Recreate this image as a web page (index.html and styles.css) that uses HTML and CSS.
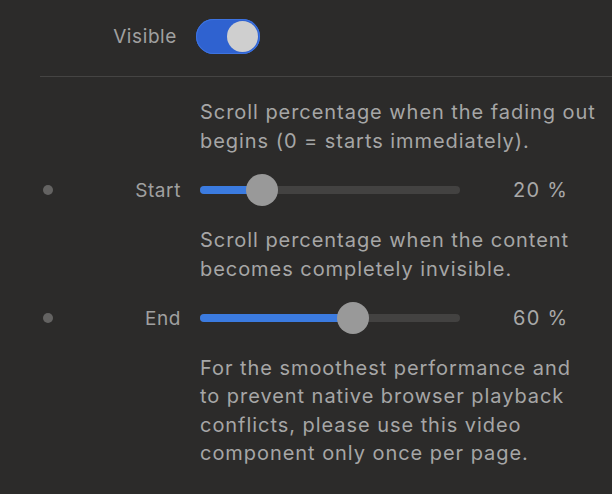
FILE: index.html
```html
<!DOCTYPE html>
<html>
<head>
<meta charset="utf-8">
<link rel="stylesheet" href="styles.css">
</head>
<body>
<div class="panel">
  <div class="row toggle-row">
    <span class="label vis-label">Visible</span>
    <div class="toggle"><div class="toggle-knob"></div></div>
  </div>
  <div class="sep"></div>
  <p class="desc desc1">Scroll percentage when the fading out begins (0 = starts immediately).</p>
  <div class="row slider-row">
    <span class="dot"></span>
    <span class="label">Start</span>
    <div class="slider">
      <div class="track"></div>
      <div class="fill" style="width:62px"></div>
      <div class="knob" style="left:46px"></div>
    </div>
    <span class="value">20 %</span>
  </div>
  <p class="desc desc2">Scroll percentage when the content becomes completely invisible.</p>
  <div class="row slider-row">
    <span class="dot"></span>
    <span class="label">End</span>
    <div class="slider">
      <div class="track"></div>
      <div class="fill" style="width:153px"></div>
      <div class="knob" style="left:137px"></div>
    </div>
    <span class="value">60 %</span>
  </div>
  <p class="desc desc3">For the smoothest performance and to prevent native browser playback conflicts, please use this video component only once per page.</p>
</div>
</body>
</html>
```
FILE: styles.css
```css
html, body {
  margin: 0;
  padding: 0;
  background: #2c2b2a;
}
body {
  width: 612px;
  height: 494px;
  overflow: hidden;
  font-family: Inter, "Noto Sans", sans-serif;
  color: #a5a5a5;
}
.panel {
  display: flex;
  flex-direction: column;
  padding-top: 19px;
}
.row {
  display: flex;
  align-items: center;
}
.toggle-row {
  height: 35px;
  padding-left: 100px;
}
.label {
  font-size: 19px;
  letter-spacing: 0.6px;
  color: #a0a0a0;
  text-align: right;
}
.vis-label {
  width: 77px;
  margin-right: 19px;
}
.toggle {
  width: 64px;
  height: 35px;
  border-radius: 18px;
  background: #2f62d0;
  box-shadow: inset 0 0 0 1px #3d73e0;
  box-sizing: border-box;
  display: flex;
  justify-content: flex-end;
  align-items: center;
  padding-right: 2px;
}
.toggle-knob {
  width: 31px;
  height: 31px;
  border-radius: 50%;
  background: #cfcfcf;
}
.sep {
  margin-top: 22px;
  margin-left: 40px;
  height: 1px;
  background: #454443;
}
.desc {
  margin: 21px 0 0 200px;
  width: 408px;
  font-size: 20px;
  letter-spacing: 0.95px;
  line-height: 28.5px;
  color: #a6a6a6;
}
.slider-row {
  height: 32px;
  margin-top: 19px;
  padding-left: 43px;
}
.dot {
  width: 10px;
  height: 10px;
  border-radius: 50%;
  background: #646362;
  flex: none;
}
.slider-row .label {
  width: 128px;
  margin-right: 19px;
}
.slider {
  position: relative;
  width: 260px;
  height: 32px;
  flex: none;
}
.track {
  position: absolute;
  left: 0;
  right: 0;
  top: 12px;
  height: 8px;
  border-radius: 4px;
  background: #434241;
}
.fill {
  position: absolute;
  left: 0;
  top: 12px;
  height: 8px;
  border-radius: 4px;
  background: #3b7be0;
}
.knob {
  position: absolute;
  top: 0;
  width: 32px;
  height: 32px;
  border-radius: 50%;
  background: #999999;
}
.value {
  margin-left: 53px;
  font-size: 20px;
  letter-spacing: 1.3px;
  color: #a8a8a8;
}
.desc2 {
  margin-top: 20px;
}
.desc3 {
  margin-top: 20px;
  width: 385px;
  line-height: 28.3px;
}
```
